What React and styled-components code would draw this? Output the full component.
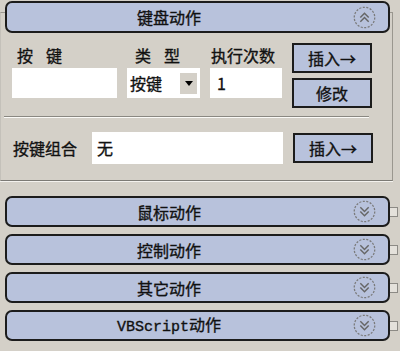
import React from 'react'
import styled, { createGlobalStyle } from 'styled-components'

const GlobalStyle = createGlobalStyle`
	body {
		margin: 0;
		background: #d4d0c8;
		font-family: 'Noto Sans CJK SC', 'Liberation Sans', sans-serif;
		color: #111;
	}
`

const Chevron = ({ up }) => (
	<svg width='23' height='23' viewBox='0 0 22 22'>
		<circle
			cx='11'
			cy='11'
			r='9.8'
			fill='none'
			stroke='#7a7a7a'
			strokeWidth='1.2'
			strokeDasharray='2 1.4'
		/>
		{up ? (
			<g fill='none' stroke='#666' strokeWidth='1.4'>
				<polyline points='7,11 11,7 15,11' />
				<polyline points='7,15 11,11 15,15' />
			</g>
		) : (
			<g fill='none' stroke='#666' strokeWidth='1.4'>
				<polyline points='7,7 11,11 15,7' />
				<polyline points='7,11 11,15 15,11' />
			</g>
		)}
	</svg>
)

const sections = ['鼠标动作', '控制动作', '其它动作', 'VBScript动作']

const App = () => {
	return (
		<Page>
			<GlobalStyle />
			<Group>
				<Bar $tall>
					<Title>键盘动作</Title>
					<Chevron up />
				</Bar>
				<Panel>
					<TopRow>
						<Field>
							<Label $indent={5} $spread>
								按键
							</Label>
							<TextBox />
						</Field>
						<Field>
							<Label $indent={8} $spread>
								类型
							</Label>
							<SelectBox>
								<SelectText>按键</SelectText>
								<DropBtn>
									<Arrow />
								</DropBtn>
							</SelectBox>
						</Field>
						<Field>
							<Label $indent={1}>执行次数</Label>
							<TextBox>1</TextBox>
						</Field>
						<ButtonStack>
							<Button>插入→</Button>
							<Button>修改</Button>
						</ButtonStack>
					</TopRow>
					<Separator />
					<ComboRow>
						<ComboLabel>按键组合</ComboLabel>
						<ComboBox>无</ComboBox>
						<Button>插入→</Button>
					</ComboRow>
				</Panel>
			</Group>
			<List>
				{sections.map((s) => (
					<Row key={s}>
						<Bar>
							<Title>
								{s.startsWith('VB') ? (
									<>
										<Mono>VBScript</Mono>动作
									</>
								) : (
									s
								)}
							</Title>
							<Chevron />
						</Bar>
						<Nub />
					</Row>
				))}
			</List>
		</Page>
	)
}

const Page = styled.div`
	width: 400px;
	height: 351px;
	overflow: hidden;
	padding-top: 1px;
	box-sizing: border-box;
	-webkit-text-stroke: 0.35px #111;
`

const Group = styled.section`
	display: flex;
	flex-direction: column;
`

const Bar = styled.div`
	position: relative;
	z-index: 1;
	box-sizing: border-box;
	margin-left: 5px;
	width: 385px;
	height: ${(p) => (p.$tall ? '32px' : '31px')};
	display: flex;
	align-items: center;
	background: #b8c2dc;
	border: 2px solid #1c1c1c;
	border-radius: 7px;
	padding-right: 12px;
	svg {
		flex: none;
	}
`

const Title = styled.div`
	flex: 1;
	text-align: center;
	padding-right: 22px;
	font-size: 16px;
	line-height: 20px;
	color: #111;
`

const Mono = styled.span`
	font-family: 'Liberation Mono', monospace;
	font-size: 15px;
`

const Panel = styled.div`
	margin-top: -21px;
	width: 393px;
	box-sizing: border-box;
	border: 1px solid #9a978f;
	border-left-color: #c4c1ba;
	border-bottom-color: #7c7a75;
	box-shadow: 0 1px 0 #f4f2ee;
	padding: 30px 0 16px 11px;
`

const TopRow = styled.div`
	display: grid;
	grid-template-columns: 105px 73px 72px 80px;
	column-gap: 10px;
	align-items: start;
`

const Field = styled.div`
	display: flex;
	flex-direction: column;
	padding-top: 2px;
`

const Label = styled.div`
	padding-left: ${(p) => p.$indent}px;
	font-size: 16px;
	line-height: 20px;
	height: 20px;
	margin-bottom: 3px;
	letter-spacing: ${(p) => (p.$spread ? '13px' : '0')};
	white-space: nowrap;
`

const TextBox = styled.div`
	height: 30px;
	background: #fff;
	box-sizing: border-box;
	padding-left: 7px;
	font-size: 16px;
	line-height: 30px;
`

const SelectBox = styled.div`
	height: 30px;
	background: #fff;
	display: flex;
	align-items: center;
	padding: 0 3px;
`

const SelectText = styled.span`
	flex: 1;
	font-size: 16px;
	line-height: 20px;
`

const DropBtn = styled.div`
	width: 17px;
	height: 21px;
	background: #d4d0c8;
	display: flex;
	align-items: center;
	justify-content: center;
`

const Arrow = styled.span`
	width: 0;
	height: 0;
	border-left: 4px solid transparent;
	border-right: 4px solid transparent;
	border-top: 5px solid #000;
`

const ButtonStack = styled.div`
	display: flex;
	flex-direction: column;
	gap: 5px;
`

const Button = styled.button`
	width: 80px;
	height: 30px;
	padding: 0;
	background: #b8c2dc;
	border: 2px solid #1c1c1c;
	font-family: inherit;
	font-size: 16px;
	color: #111;
`

const Separator = styled.div`
	margin: 8px 0 0 -8px;
	width: 365px;
	height: 1px;
	background: #8a8882;
	box-shadow: 0 1px 0 #fbfaf7;
`

const ComboRow = styled.div`
	margin-top: 15px;
	display: flex;
	align-items: center;
`

const ComboLabel = styled.div`
	width: 79px;
	padding-left: 1px;
	font-size: 16px;
	line-height: 20px;
	white-space: nowrap;
`

const ComboBox = styled.div`
	width: 191px;
	height: 32px;
	margin-right: 10px;
	background: #fff;
	box-sizing: border-box;
	padding-left: 5px;
	font-size: 16px;
	line-height: 32px;
`

const List = styled.div`
	margin-top: 15px;
	display: flex;
	flex-direction: column;
	gap: 7px;
`

const Row = styled.div`
	display: flex;
	align-items: center;
`

const Nub = styled.div`
	width: 7px;
	height: 8px;
	border: 1px solid #8c8a85;
	border-left: none;
	background: #e4e1db;
`

export default App
